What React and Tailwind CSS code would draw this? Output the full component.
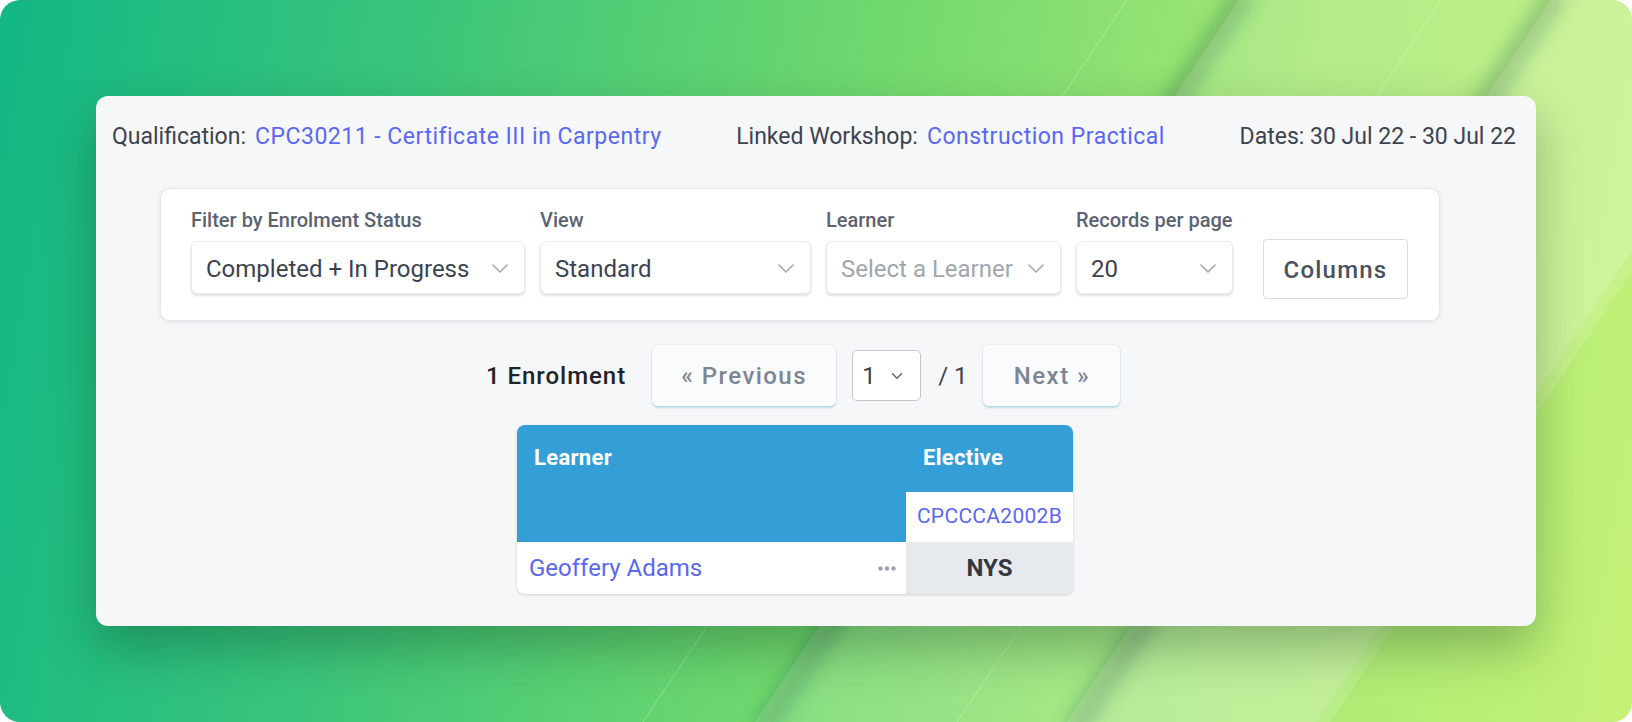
import { ChevronDown } from 'lucide-react';

const font = { fontFamily: 'Roboto, "Noto Sans", sans-serif' };

const Chevron = ({ className = '' }) => (
  <svg width="16" height="9" viewBox="0 0 16 9" fill="none" className={className}>
    <path d="M1 1l7 7 7-7" stroke="currentColor" strokeWidth="1.6" strokeLinecap="round" strokeLinejoin="round" />
  </svg>
);

const Backdrop = () => (
  <svg className="absolute inset-0 pointer-events-none" width="1632" height="722" viewBox="0 0 1632 722">
    <defs>
      <filter id="soft" x="-20%" y="-20%" width="140%" height="140%">
        <feGaussianBlur stdDeviation="10" />
      </filter>
    </defs>
    <line x1="1247" y1="-10" x2="761" y2="732" stroke="rgba(20,90,60,0.4)" strokeWidth="16" filter="url(#soft)" />
    <polygon points="1239,0 1800,0 1316,722 755,722" fill="rgba(255,255,255,0.14)" />
    <line x1="1559" y1="-10" x2="1073" y2="732" stroke="rgba(20,90,60,0.4)" strokeWidth="16" filter="url(#soft)" />
    <polygon points="1551,0 1814,0 1330,722 1067,722" fill="rgba(255,255,255,0.15)" />
    <line x1="1127" y1="0" x2="643" y2="722" stroke="rgba(255,255,255,0.3)" strokeWidth="1" />
    <line x1="1441" y1="0" x2="957" y2="722" stroke="rgba(255,255,255,0.3)" strokeWidth="1" />
  </svg>
);

const Select = ({ label, value, width, placeholder }) => (
  <div className="flex flex-col">
    <div className="mb-[9px] text-[20px] leading-[24px] font-medium text-[#5b6372]">{label}</div>
    <div
      className={`${width} h-[53px] flex items-center justify-between pl-[14px] pr-[16px] pt-[2px] bg-white rounded-[6px] border border-[#e7e9ec] shadow-[0_2px_3px_rgba(0,0,0,0.13)]`}
    >
      <span className={`text-[24px] ${placeholder ? 'text-[#a0a6ae]' : 'text-[#3c4350]'}`}>{value}</span>
      <Chevron className="text-[#a3a9b1]" />
    </div>
  </div>
);

const PageButton = ({ children, width }) => (
  <div
    className={`${width} h-[61px] flex items-center justify-center rounded-[6px] bg-[#fafbfc] shadow-[0_2px_2px_rgba(150,195,225,0.55),0_0_0_1px_rgba(0,0,0,0.04)] text-[24px] font-medium tracking-[0.06em] text-[#7c8593]`}
  >
    {children}
  </div>
);

export default function App() {
  return (
    <div className="w-[1632px] h-[722px] bg-white" style={font}>
      <div className="relative w-full h-full overflow-hidden rounded-[20px] bg-[linear-gradient(100deg,#12b784_0%,#3cc57a_25%,#6fd86e_50%,#a6e875_75%,#c4f276_100%)]">
        <Backdrop />

        <div className="relative ml-[96px] pt-[96px]">
          <div className="w-[1440px] h-[530px] rounded-[12px] bg-[#f6f7f9] shadow-[0_22px_50px_rgba(0,40,20,0.3)]">
            <div className="flex justify-between pl-4 pr-5 pt-[27px] text-[23px] leading-[28px] text-[#3c4350]">
              <div>
                Qualification:<span className="ml-[9px] tracking-[0.5px] text-[#5a68f0]">CPC30211 - Certificate III in Carpentry</span>
              </div>
              <div>
                Linked Workshop:<span className="ml-[9px] tracking-[0.5px] text-[#5a68f0]">Construction Practical</span>
              </div>
              <div>Dates: 30 Jul 22 - 30 Jul 22</div>
            </div>

            <div className="ml-16 mr-24 mt-[37px]">
              <div className="h-[133px] flex items-end px-[30px] pb-[26px] bg-white rounded-[10px] border border-[#e6e8eb] shadow-[0_1px_4px_rgba(0,0,0,0.1)]">
                <div className="flex items-end gap-[15px]">
                  <Select label="Filter by Enrolment Status" value="Completed + In Progress" width="w-[334px]" />
                  <Select label="View" value="Standard" width="w-[271px]" />
                  <Select label="Learner" value="Select a Learner" width="w-[235px]" placeholder />
                  <Select label="Records per page" value="20" width="w-[157px]" />
                </div>
                <div className="ml-[30px] mb-[-5px] w-[145px] h-[60px] flex items-center justify-center pt-[2px] bg-white rounded-[4px] border border-[#d8dce2] text-[24px] font-medium tracking-[0.05em] text-[#4a5262]">
                  Columns
                </div>
              </div>

              <div className="flex items-center mt-6 ml-[326px]">
                <div className="text-[24px] font-medium tracking-[0.04em] text-[#1f2328]">1 Enrolment</div>
                <div className="ml-[26px]">
                  <PageButton width="w-[184px]">« Previous</PageButton>
                </div>
                <div className="ml-4 w-[69px] h-[51px] flex items-center justify-between pl-[9px] pr-[14px] bg-white rounded-[5px] border border-[#c4c8ce] text-[24px] text-[#3c4350]">
                  <span>1</span>
                  <ChevronDown size={18} strokeWidth={2.2} className="text-[#666c75]" />
                </div>
                <div className="ml-[17px] text-[24px] text-[#3c4350]">/ 1</div>
                <div className="ml-[16px]">
                  <PageButton width="w-[137px]">Next »</PageButton>
                </div>
              </div>

              <div className="ml-[357px] mt-[19px] w-[556px] grid grid-cols-[389px_167px] rounded-[8px] overflow-hidden shadow-[0_1px_3px_rgba(0,0,0,0.16)]">
                <div className="row-span-2 h-[117px] bg-[#349fd7] pl-[17px] pt-[19px] text-[22px] leading-[28px] font-bold tracking-[0.3px] text-white">
                  Learner
                </div>
                <div className="h-[67px] bg-[#349fd7] pl-[17px] pt-[19px] text-[22px] leading-[28px] font-bold tracking-[0.3px] text-white">
                  Elective
                </div>
                <div className="h-[50px] bg-white flex items-center justify-center text-[21px] tracking-[0.3px] text-[#5a68f0]">
                  CPCCCA2002B
                </div>
                <div className="h-[52px] bg-white flex items-center justify-between pl-[12px] pr-[10px]">
                  <span className="text-[24px] text-[#5a68f0]">Geoffery Adams</span>
                  <svg width="18" height="5" viewBox="0 0 18 5">
                    <circle cx="2.5" cy="2.5" r="2.2" fill="#9aa1ab" />
                    <circle cx="9" cy="2.5" r="2.2" fill="#9aa1ab" />
                    <circle cx="15.5" cy="2.5" r="2.2" fill="#9aa1ab" />
                  </svg>
                </div>
                <div className="h-[52px] bg-[#e6e9ed] flex items-center justify-center text-[24px] font-bold text-[#33383f]">
                  NYS
                </div>
              </div>
            </div>
          </div>
        </div>
      </div>
    </div>
  );
}
